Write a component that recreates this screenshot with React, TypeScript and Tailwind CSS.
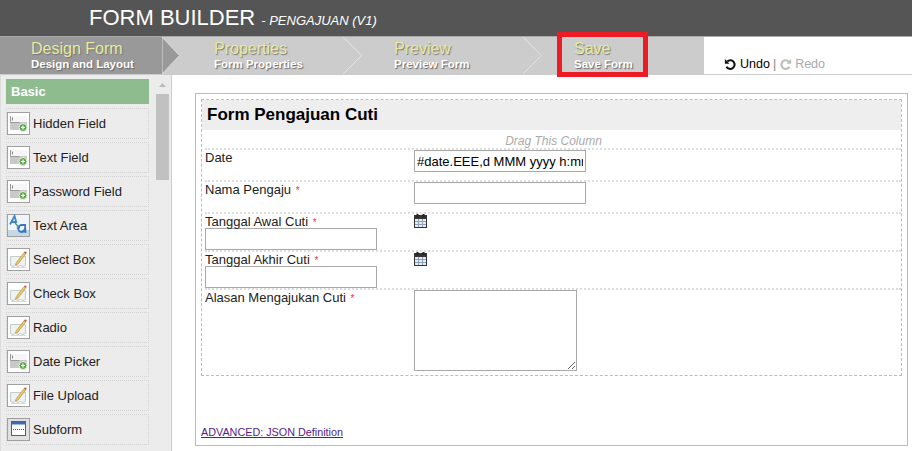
import React from 'react';

const tabs = [
  { title: 'Design Form', sub: 'Design and Layout', width: 'w-[183px]', active: true },
  { title: 'Properties', sub: 'Form Properties', width: 'w-[180px]' },
  { title: 'Preview', sub: 'Preview Form', width: 'w-[180px]' },
  { title: 'Save', sub: 'Save Form', width: 'w-[161px]' },
];

const palette = [
  { label: 'Hidden Field', icon: 'field' },
  { label: 'Text Field', icon: 'field' },
  { label: 'Password Field', icon: 'field' },
  { label: 'Text Area', icon: 'area' },
  { label: 'Select Box', icon: 'edit' },
  { label: 'Check Box', icon: 'edit' },
  { label: 'Radio', icon: 'edit' },
  { label: 'Date Picker', icon: 'field' },
  { label: 'File Upload', icon: 'edit' },
  { label: 'Subform', icon: 'sub' },
];

function PaletteIcon({ kind }: { kind: string }) {
  return (
    <svg width="23" height="23" viewBox="0 0 23 23" className="shrink-0">
      <rect x="0.5" y="0.5" width="22" height="22" fill="#fff" stroke="#a0a0a0" />
      {kind === 'field' && (
        <>
          <rect x="3" y="4" width="17" height="14" fill="#c9c9c9" />
          <rect x="3" y="4" width="17" height="6" fill="#f6f6f6" />
          <path d="M3.500 4v6.500h9" fill="none" stroke="#9a9a9a" />
          <path d="M5.500 5.500v3" stroke="#888" />
          <circle cx="16" cy="15.500" r="4" fill="#5fa84a" stroke="#e6f2e0" />
          <path d="M14 15.500h4M16 13.500v4" stroke="#fff" strokeWidth="1.200" />
        </>
      )}
      {kind === 'area' && (
        <>
          <rect x="1" y="1" width="21" height="21" fill="#f1f5f7" />
          <rect x="1" y="16" width="21" height="6" fill="#c5d9e4" />
          <path d="M3 10.500 7.500 2l2 7M4.500 8h5" fill="none" stroke="#3f86c9" strokeWidth="1.800" />
          <path d="M8 9l4 4.500M12.500 11v3h-3" fill="none" stroke="#3d9a5a" strokeWidth="1.200" />
          <path d="M19 11h-4a3 3 0 0 0-.5 7c1.800 0 3-1 3.500-3.500M18 10l.5 9" fill="none" stroke="#3a76c4" strokeWidth="1.800" />
        </>
      )}
      {kind === 'edit' && (
        <>
          <path d="M3.500 8.500h15v9l-2.500 1-2.500-1-2.500 1-2.500-1-2.500 1-2.500-1z" fill="#eef3f1" stroke="#c3ccc8" />
          <path d="M4 19.500h15" stroke="#d5dcd9" />
          <path d="M9 15l8-10.500 1.800 1.400-8 10.500-2.400.8z" fill="#e6c565" stroke="#a8843a" strokeWidth="0.500" />
          <path d="M17 4.500l1-1.300 1.800 1.400-1 1.300z" fill="#c9573f" />
        </>
      )}
      {kind === 'sub' && (
        <>
          <rect x="1" y="1" width="21" height="21" fill="#e0e0e0" />
          <rect x="4.500" y="3.500" width="14" height="14" fill="#fff" stroke="#3f5f9f" />
          <rect x="4.500" y="3.500" width="14" height="3" fill="#3f68b8" />
          <path d="M6 11.500h11" stroke="#555" strokeDasharray="1 1" />
        </>
      )}
    </svg>
  );
}

function CalendarIcon() {
  return (
    <svg width="13" height="14" viewBox="0 0 13 14" className="block">
      <rect x="0.500" y="1.500" width="12" height="12" fill="#e6ebf2" stroke="#333" />
      <rect x="0.500" y="1.500" width="12" height="3" fill="#333" stroke="#333" />
      <rect x="2.500" y="0" width="2" height="3" fill="#222" />
      <rect x="8.500" y="0" width="2" height="3" fill="#222" />
      <path d="M1 7.500h11M1 10.500h11M4.500 5v8M8.500 5v8" stroke="#8fa2ba" />
    </svg>
  );
}

function Chevron({ active }: { active?: boolean }) {
  if (active) {
    return (
      <svg width="18" height="37" viewBox="0 0 18 37" className="absolute right-[3px] top-0">
        <path d="M0 0 17.500 18.500 0 37z" fill="#999" stroke="#ddd" />
      </svg>
    );
  }
  return (
    <svg width="20" height="37" viewBox="0 0 20 37" className="absolute right-[1px] top-0">
      <path d="M1 0 19.500 18.500 1 37" fill="none" stroke="#e2e2e2" />
    </svg>
  );
}

const inputClass = 'block h-[22px] border border-[#a9a9a9] bg-white px-[2px] text-[13px] text-black outline-none';
const rowClass = 'flex border-t-2 border-dotted border-[#ddd]';
const Star = () => <span className="ml-[1px] text-[10px] text-[#e33]">*</span>;

export default function App() {
  return (
    <div className="relative flex h-[451px] w-[912px] flex-col overflow-hidden bg-white font-['Liberation_Sans',Arial,sans-serif] text-[13px] text-[#222]">
      <header className="flex h-[37px] shrink-0 items-center border-b border-[#aaa] bg-[#555] pl-[89px] text-white">
        <span className="text-[22px] leading-none">FORM BUILDER</span>
        <span className="ml-[6px] mt-[5px] text-[13px] italic leading-none">- PENGAJUAN (V1)</span>
      </header>

      <div className="flex h-[38px] shrink-0 border-b border-[#ccc]">
        <div className="flex w-[704px] bg-[#ccc]">
          {tabs.map((tab, i) => (
            <div key={tab.title} className={`relative ${tab.width} pl-[31px] pt-[2px]`}>
              {tab.active && <div className="absolute inset-y-0 left-0 w-[162px] bg-[#999]" />}
              {i < 3 && <Chevron active={tab.active} />}
              <div className="relative text-[16px] leading-[19px] text-[#e6eb9e] [text-shadow:1px_1px_1px_#777]">{tab.title}</div>
              <div className="relative text-[11.500px] font-bold leading-[13px] text-white [text-shadow:1px_1px_1px_#666]">{tab.sub}</div>
            </div>
          ))}
        </div>
        <div className="flex flex-1 items-end gap-[3px] pb-[2px] pl-[20px] text-[12.500px] leading-[15px]">
          <svg width="13" height="13" viewBox="0 0 12 12" className="mb-[1px]">
            <path d="M3 3.200A4 4 0 1 1 2.300 8" fill="none" stroke="#111" strokeWidth="1.900" />
            <path d="M0.800 1v4.200H5z" fill="#111" />
          </svg>
          <span className="text-black">Undo</span>
          <span className="text-[#888]">|</span>
          <svg width="13" height="13" viewBox="0 0 12 12" className="mb-[1px]">
            <path d="M9 3.200A4 4 0 1 0 9.700 8" fill="none" stroke="#bbb" strokeWidth="1.900" />
            <path d="M11.200 1v4.200H7z" fill="#bbb" />
          </svg>
          <span className="text-[#aaa]">Redo</span>
        </div>
      </div>

      <div className="flex min-h-0 flex-1">
        <aside className="flex w-[172px] shrink-0 border-x border-l-[#ddd] border-r-[#ccc] bg-[#ececec] pl-[5px] pt-[4px]">
          <div className="w-[143px]">
            <div className="flex h-[25px] items-center bg-[#8fbc8f] pl-[5px] text-[13px] font-bold text-white">Basic</div>
            <div className="mt-[4px] flex flex-col gap-[3px]">
              {palette.map((item) => (
                <div key={item.label} className="flex h-[31px] items-center gap-[3px] border border-dotted border-[#d4d4d4]">
                  <PaletteIcon kind={item.icon} />
                  <span className="pt-[1px]">{item.label}</span>
                </div>
              ))}
            </div>
          </div>
          <div className="ml-[7px] flex w-[13px] flex-col">
            <svg width="13" height="15" viewBox="0 0 13 15"><path d="M3 8l3.500-4L10 8z" fill="#bbb" /></svg>
            <div className="h-[86px] bg-[#c1c1c1]" />
          </div>
        </aside>

        <main className="min-w-0 flex-1 pl-[23px] pr-[4px] pt-[18px] pb-[5px]">
          <div className="flex h-full flex-col border border-[#bbb] px-[5px] pt-[5px]">
            <div className="h-[277px] border border-dashed border-[#bbb] pl-[3px]">
              <h1 className="-ml-[3px] flex h-[30px] items-center bg-[#eee] pl-[5px] text-[17px] font-bold text-black">Form Pengajuan Cuti</h1>
              <div className="h-[18px] pl-[1px] text-center text-[12px] italic leading-[22px] text-[#aaa]">Drag This Column</div>
              <div className={`${rowClass} h-[32px]`}>
                <label className="w-[209px] leading-[16px]">Date</label>
                <input readOnly value="#date.EEE,d MMM yyyy h:mm" className={`${inputClass} w-[172px]`} />
              </div>
              <div className={`${rowClass} h-[32px]`}>
                <label className="w-[209px] leading-[16px]">Nama Pengaju <Star /></label>
                <input readOnly className={`${inputClass} w-[172px]`} />
              </div>
              <div className={`${rowClass} h-[38px]`}>
                <div className="w-[209px]">
                  <label className="block h-[14px] leading-[16px]">Tanggal Awal Cuti <Star /></label>
                  <input readOnly className={`${inputClass} w-[172px]`} />
                </div>
                <CalendarIcon />
              </div>
              <div className={`${rowClass} h-[38px]`}>
                <div className="w-[209px]">
                  <label className="block h-[14px] leading-[16px]">Tanggal Akhir Cuti <Star /></label>
                  <input readOnly className={`${inputClass} w-[172px]`} />
                </div>
                <CalendarIcon />
              </div>
              <div className={rowClass}>
                <label className="w-[209px] leading-[16px]">Alasan Mengajukan Cuti <Star /></label>
                <textarea readOnly className="block h-[81px] w-[163px] border border-[#a9a9a9] bg-white outline-none" />
              </div>
            </div>
            <a href="#json" className="mt-auto mb-[7px] text-[10.800px] leading-[12px] text-[#551a8b] underline">ADVANCED: JSON Definition</a>
          </div>
        </main>
      </div>

      {/* highlight drawn over the Save tab */}
      <div className="pointer-events-none absolute left-[557px] top-[32px] h-[45px] w-[91px] border-[5px] border-[#ed1c24]" />
    </div>
  );
}
